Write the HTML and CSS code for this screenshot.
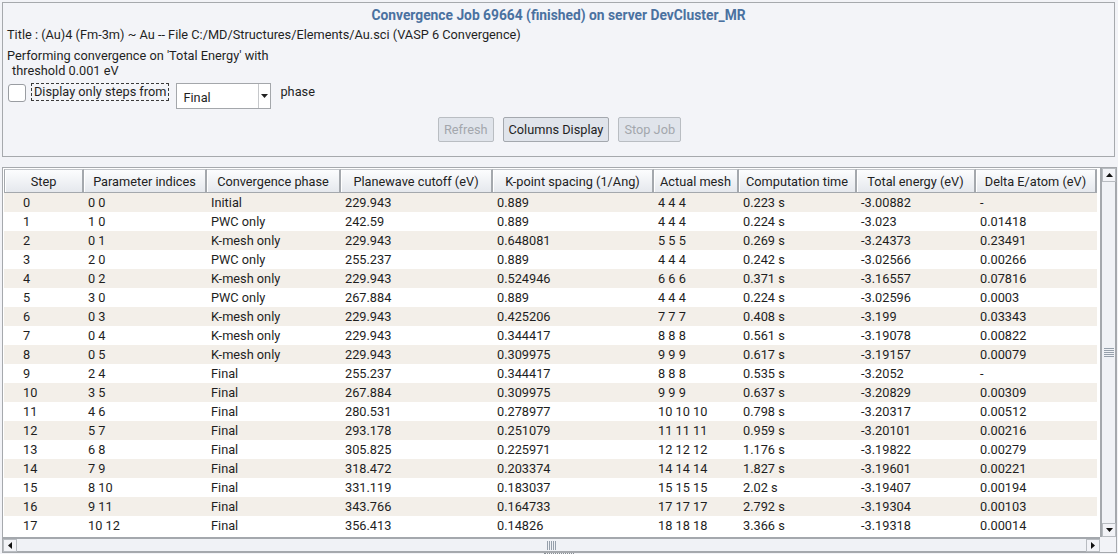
FILE: index.html
```html
<!DOCTYPE html>
<html>
<head>
<meta charset="utf-8">
<title>Convergence Job</title>
<link rel="stylesheet" href="styles.css">
</head>
<body>
<div class="app">
  <section class="job-panel">
    <h1 class="job-title">Convergence Job 69664 (finished) on server DevCluster_MR</h1>
    <p class="info">Title : (Au)4 (Fm-3m) ~ Au -- File C:/MD/Structures/Elements/Au.sci (VASP 6 Convergence)</p>
    <p class="info perf">Performing convergence on 'Total Energy' with<br><span class="indent">threshold 0.001 eV</span></p>
    <div class="filter-row">
      <span class="checkbox"></span>
      <span class="check-label">Display only steps from</span>
      <div class="select">
        <span class="select-value">Final</span>
        <span class="select-btn"><svg width="7" height="4" viewBox="0 0 7 4"><polygon points="0,0 7,0 3.5,4" fill="#222"/></svg></span>
      </div>
      <span class="phase">phase</span>
    </div>
    <div class="buttons">
      <button class="btn disabled">Refresh</button>
      <button class="btn">Columns Display</button>
      <button class="btn disabled">Stop Job</button>
    </div>
  </section>

  <section class="table-frame">
    <div class="table-main">
      <div class="table-view">
        <table class="grid">
          <colgroup>
            <col style="width:80px"><col style="width:123px"><col style="width:134px"><col style="width:152px"><col style="width:161px"><col style="width:85px"><col style="width:118px"><col style="width:119px"><col style="width:121px">
          </colgroup>
          <thead>
            <tr>
              <th>Step</th><th>Parameter indices</th><th>Convergence phase</th><th>Planewave cutoff (eV)</th><th>K-point spacing (1/Ang)</th><th>Actual mesh</th><th>Computation time</th><th>Total energy (eV)</th><th>Delta E/atom (eV)</th>
            </tr>
          </thead>
          <tbody>
            <tr><td class="step">0</td><td>0 0</td><td>Initial</td><td>229.943</td><td>0.889</td><td>4 4 4</td><td>0.223 s</td><td>-3.00882</td><td>-</td></tr>
            <tr><td class="step">1</td><td>1 0</td><td>PWC only</td><td>242.59</td><td>0.889</td><td>4 4 4</td><td>0.224 s</td><td>-3.023</td><td>0.01418</td></tr>
            <tr><td class="step">2</td><td>0 1</td><td>K-mesh only</td><td>229.943</td><td>0.648081</td><td>5 5 5</td><td>0.269 s</td><td>-3.24373</td><td>0.23491</td></tr>
            <tr><td class="step">3</td><td>2 0</td><td>PWC only</td><td>255.237</td><td>0.889</td><td>4 4 4</td><td>0.242 s</td><td>-3.02566</td><td>0.00266</td></tr>
            <tr><td class="step">4</td><td>0 2</td><td>K-mesh only</td><td>229.943</td><td>0.524946</td><td>6 6 6</td><td>0.371 s</td><td>-3.16557</td><td>0.07816</td></tr>
            <tr><td class="step">5</td><td>3 0</td><td>PWC only</td><td>267.884</td><td>0.889</td><td>4 4 4</td><td>0.224 s</td><td>-3.02596</td><td>0.0003</td></tr>
            <tr><td class="step">6</td><td>0 3</td><td>K-mesh only</td><td>229.943</td><td>0.425206</td><td>7 7 7</td><td>0.408 s</td><td>-3.199</td><td>0.03343</td></tr>
            <tr><td class="step">7</td><td>0 4</td><td>K-mesh only</td><td>229.943</td><td>0.344417</td><td>8 8 8</td><td>0.561 s</td><td>-3.19078</td><td>0.00822</td></tr>
            <tr><td class="step">8</td><td>0 5</td><td>K-mesh only</td><td>229.943</td><td>0.309975</td><td>9 9 9</td><td>0.617 s</td><td>-3.19157</td><td>0.00079</td></tr>
            <tr><td class="step">9</td><td>2 4</td><td>Final</td><td>255.237</td><td>0.344417</td><td>8 8 8</td><td>0.535 s</td><td>-3.2052</td><td>-</td></tr>
            <tr><td class="step">10</td><td>3 5</td><td>Final</td><td>267.884</td><td>0.309975</td><td>9 9 9</td><td>0.637 s</td><td>-3.20829</td><td>0.00309</td></tr>
            <tr><td class="step">11</td><td>4 6</td><td>Final</td><td>280.531</td><td>0.278977</td><td>10 10 10</td><td>0.798 s</td><td>-3.20317</td><td>0.00512</td></tr>
            <tr><td class="step">12</td><td>5 7</td><td>Final</td><td>293.178</td><td>0.251079</td><td>11 11 11</td><td>0.959 s</td><td>-3.20101</td><td>0.00216</td></tr>
            <tr><td class="step">13</td><td>6 8</td><td>Final</td><td>305.825</td><td>0.225971</td><td>12 12 12</td><td>1.176 s</td><td>-3.19822</td><td>0.00279</td></tr>
            <tr><td class="step">14</td><td>7 9</td><td>Final</td><td>318.472</td><td>0.203374</td><td>14 14 14</td><td>1.827 s</td><td>-3.19601</td><td>0.00221</td></tr>
            <tr><td class="step">15</td><td>8 10</td><td>Final</td><td>331.119</td><td>0.183037</td><td>15 15 15</td><td>2.02 s</td><td>-3.19407</td><td>0.00194</td></tr>
            <tr><td class="step">16</td><td>9 11</td><td>Final</td><td>343.766</td><td>0.164733</td><td>17 17 17</td><td>2.792 s</td><td>-3.19304</td><td>0.00103</td></tr>
            <tr><td class="step">17</td><td>10 12</td><td>Final</td><td>356.413</td><td>0.14826</td><td>18 18 18</td><td>3.366 s</td><td>-3.19318</td><td>0.00014</td></tr>
          </tbody>
        </table>
      </div>
      <div class="vscroll">
        <span class="sb-btn"><svg width="7" height="4" viewBox="0 0 7 4"><polygon points="0,4 3.5,0 7,4" fill="#111"/></svg></span>
        <span class="sb-thumb v"><span class="grip-v"></span></span>
        <span class="sb-btn"><svg width="7" height="4" viewBox="0 0 7 4"><polygon points="0,0 7,0 3.5,4" fill="#111"/></svg></span>
      </div>
    </div>
    <div class="hscroll-row">
      <div class="hscroll">
        <span class="sb-btn h"><svg width="4" height="7" viewBox="0 0 4 7"><polygon points="4,0 4,7 0,3.5" fill="#111"/></svg></span>
        <span class="sb-thumb h"><span class="grip-h"></span></span>
        <span class="sb-btn h"><svg width="4" height="7" viewBox="0 0 4 7"><polygon points="0,0 0,7 4,3.5" fill="#111"/></svg></span>
      </div>
      <div class="corner"></div>
    </div>
  </section>
  <div class="splitter"><span class="splitter-dots"></span></div>
</div>
</body>
</html>
```

FILE: styles.css
```css
html, body {
  margin: 0;
  padding: 0;
}

body {
  background: #f2f3f7;
  font-family: Roboto, "Liberation Sans", Arial, sans-serif;
  font-size: 12.75px;
  color: #1f1f1f;
  width: 1118px;
  height: 554px;
  overflow: hidden;
}

.app {
  padding: 2px 3px 0 2px;
  display: flex;
  flex-direction: column;
}

/* ---------- top panel ---------- */
.job-panel {
  box-sizing: border-box;
  height: 155px;
  border: 1px solid #a6a9ad;
  background: #f3f4f8;
  padding: 2px 4px 0 4px;
}

.job-title {
  margin: 0;
  font-size: 13.8px;
  font-weight: bold;
  color: #4a71a0;
  text-align: center;
  line-height: 20px;
}

.info {
  margin: 2px 0 0;
  line-height: 16px;
}

.perf {
  margin-top: 5px;
  line-height: 15px;
}

.indent {
  padding-left: 5px;
}

.filter-row {
  display: flex;
  align-items: flex-start;
  margin-top: 5px;
  height: 26px;
}

.checkbox {
  box-sizing: border-box;
  width: 18px;
  height: 18px;
  margin: 1px 0 0 1px;
  border: 1px solid #9a9da2;
  border-radius: 3px;
  background: #fff;
}

.check-label {
  box-sizing: border-box;
  height: 18px;
  margin-left: 5px;
  padding: 0 2px 0 2px;
  border: 1px dashed #3a3a3a;
  line-height: 16px;
}

.select {
  box-sizing: border-box;
  display: flex;
  width: 95px;
  height: 26px;
  margin-left: 7px;
  border: 1px solid #a4a7ab;
  background: #fff;
}

.select-value {
  flex: 1;
  padding-left: 6px;
  line-height: 26px;
  padding-top: 1px;
}

.select-btn {
  width: 11px;
  display: flex;
  align-items: center;
  justify-content: center;
  border-left: 1px solid #c6c8cb;
}

.phase {
  margin-left: 9px;
  line-height: 18px;
}

.buttons {
  display: flex;
  justify-content: center;
  gap: 9px;
  margin-top: 8px;
  padding-left: 2px;
}

.btn {
  box-sizing: border-box;
  height: 25px;
  padding: 0 5px;
  font-family: inherit;
  font-size: 12.75px;
  color: #1f1f1f;
  background: #e0e4eb;
  border: 1px solid #a4a8ae;
  border-radius: 2px;
}

.btn.disabled {
  color: #a3a7ad;
  border-color: #b9bdc2;
}

/* ---------- table frame ---------- */
.table-frame {
  box-sizing: border-box;
  margin-top: 10px;
  margin-right: -2px;
  height: 386px;
  border: 1px solid #a6a9ad;
  background: #fff;
  display: flex;
  flex-direction: column;
}

.table-main {
  display: flex;
  height: 369px;
}

.table-view {
  flex: 1;
  overflow: hidden;
  padding: 1px 0 0 1px;
}

.grid {
  border-collapse: separate;
  border-spacing: 0;
  table-layout: fixed;
  width: 1093px;
}

.grid th {
  box-sizing: border-box;
  height: 24px;
  padding: 0;
  font-weight: normal;
  text-align: center;
  color: #222;
  white-space: nowrap;
  background: linear-gradient(#fcfdfe, #e5e8ed);
  border-top: 1px solid #c2c5ca;
  border-right: 2px solid #a4a8ad;
  border-bottom: 1px solid #a4a8ad;
  box-shadow: inset 1px 0 0 #ffffff;
}

.grid th:first-child {
  border-left: 1px solid #a4a8ad;
}

.grid td {
  height: 19px;
  padding: 0 0 0 4px;
  line-height: 19px;
  white-space: nowrap;
  color: #1e1e1e;
}

.grid td.step {
  padding-left: 19px;
}

.grid tbody tr:nth-child(odd) td {
  background: #f3efe9;
}

/* ---------- scrollbars ---------- */
.vscroll {
  width: 14px;
  display: flex;
  flex-direction: column;
  background: #f2f3f7;
  border-left: 2px solid #a4a8ad;
}

.sb-btn {
  box-sizing: border-box;
  height: 14px;
  display: flex;
  align-items: center;
  justify-content: center;
  border: 1px solid #b8bcc1;
  background: #f2f3f7;
}

.sb-btn.h {
  width: 14px;
  height: auto;
}

.sb-thumb {
  box-sizing: border-box;
  flex: 1;
  display: flex;
  align-items: center;
  justify-content: center;
  background: #f0f2f6;
}

.sb-thumb.v {
  border-right: 1px solid #a4a8ad;
}

.sb-thumb.h {
  border-bottom: 1px solid #a4a8ad;
}

.grip-v {
  width: 10px;
  height: 9px;
  background: repeating-linear-gradient(#96a0ab 0 1px, transparent 1px 2px);
}

.grip-h {
  width: 9px;
  height: 9px;
  background: repeating-linear-gradient(90deg, #96a0ab 0 1px, transparent 1px 2px);
}

.hscroll-row {
  display: flex;
  height: 15px;
  background: #f2f3f7;
}

.hscroll {
  flex: 1;
  display: flex;
  border-top: 2px solid #a4a8ad;
}

.corner {
  width: 16px;
  background: #f2f3f7;
}

.splitter {
  display: flex;
  justify-content: center;
  height: 2px;
}

.splitter-dots {
  width: 30px;
  border-top: 1px dotted #8a9096;
}
```
